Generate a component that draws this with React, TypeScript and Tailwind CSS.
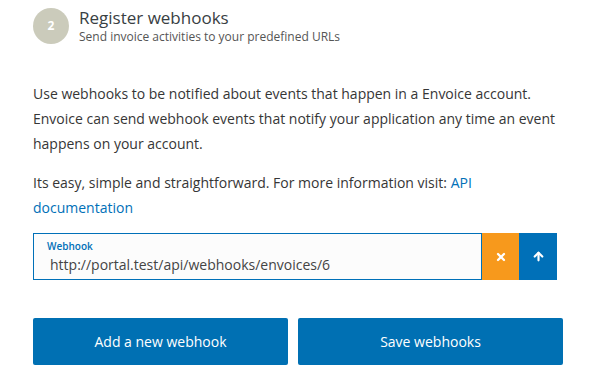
import { X, ArrowUp } from "lucide-react"

export default function App() {
  return (
    <div className="min-h-screen w-[596px] bg-white font-['Open_Sans',sans-serif] text-[#363636]">
      <div className="pl-[33px] pr-[33px]">
        {/* step header */}
        <div className="flex items-center gap-[10px] pt-[7px]">
          <div className="flex h-[36px] w-[36px] items-center justify-center rounded-full bg-[#cbcbbb] text-[12px] font-bold text-white">
            2
          </div>
          <div className="flex flex-col">
            <h2 className="text-[17px] leading-[22px] text-[#384043]">Register webhooks</h2>
            <p className="text-[12px] leading-[15px] text-[#555]">Send invoice activities to your predefined URLs</p>
          </div>
        </div>

        <div className="mt-[37px] text-[14px] leading-[25px]">
          <p>
            Use webhooks to be notified about events that happen in a Envoice account. Envoice can send webhook events
            that notify your application any time an event happens on your account.
          </p>
          <p className="mt-[14px]">
            Its easy, simple and straightforward. For more information visit:{" "}
            <a className="text-[#0070b8]" href="#">
              API documentation
            </a>
          </p>
        </div>

        {/* webhook input */}
        <div className="mt-[13px] flex h-[47px] w-[524px]">
          <div className="flex flex-1 flex-col border border-[#0070b8] bg-[#fcfcfc] px-[13px] pt-[6px]">
            <label className="text-[10px] font-semibold leading-[13px] text-[#0070b8]">Webhook</label>
            <div className="pl-[3px] pt-[2px] text-[14px] leading-[20px] text-[#444]">
              http://portal.test/api/webhooks/envoices/6
            </div>
          </div>
          <button className="flex w-[37px] items-center justify-center bg-[#f7991c] text-white">
            <X className="h-[12px] w-[12px]" strokeWidth={4.5} />
          </button>
          <button className="flex w-[38px] items-center justify-center bg-[#0070b8] text-white">
            <ArrowUp className="h-[13px] w-[13px]" strokeWidth={4} />
          </button>
        </div>

        {/* actions */}
        <div className="mt-[38px] flex gap-[10px]">
          <button className="h-[47px] w-[256px] rounded-[2px] bg-[#0070b3] text-[14px] font-medium text-white">
            Add a new webhook
          </button>
          <button className="h-[47px] w-[266px] rounded-[2px] bg-[#0070b3] text-[14px] font-medium text-white">
            Save webhooks
          </button>
        </div>
      </div>
    </div>
  )
}
